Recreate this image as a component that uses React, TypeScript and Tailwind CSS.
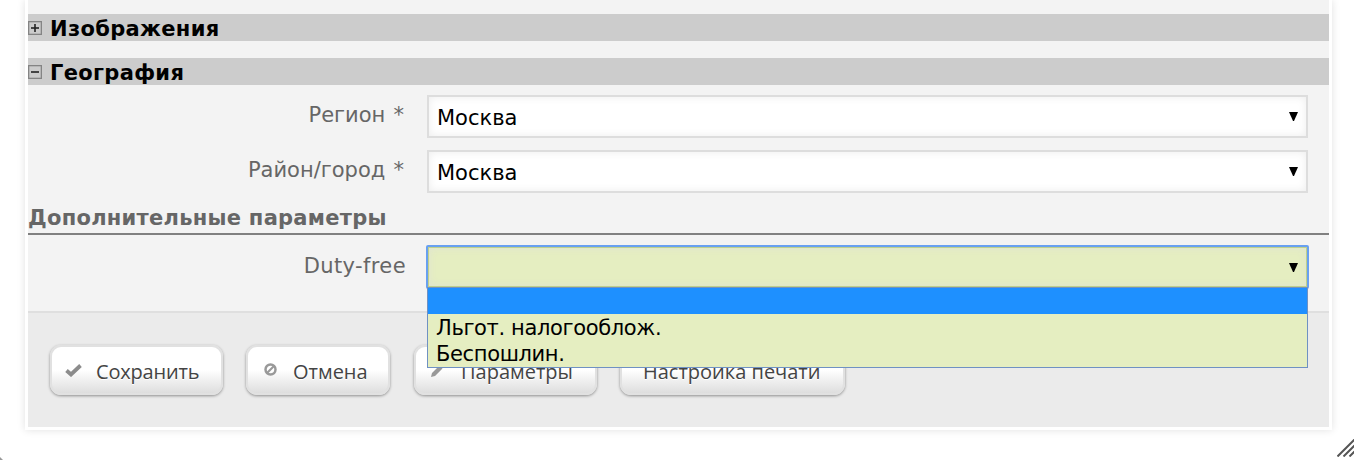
import type { ReactNode } from "react";

const OPTIONS = ["", "Льгот. налогооблож.", "Беспошлин."];

function SectionHeader({ title, open }: { title: string; open: boolean }) {
  return (
    <div className="flex h-[27px] items-center bg-[#cccccc] text-black">
      <svg width="14" height="14" viewBox="0 0 14 14" fill="none">
        <rect x="0.5" y="0.5" width="13" height="13" stroke="#848484" strokeWidth="1.6" />
        <path d="M3 7h8" stroke="#222" strokeWidth="1.6" />
        {!open && <path d="M7 3v8" stroke="#222" strokeWidth="1.6" />}
      </svg>
      <span className="ml-2 pt-[3px] text-[21px] leading-[27px] font-bold tracking-[0.33px] whitespace-nowrap">
        {title}
      </span>
    </div>
  );
}

function Arrow() {
  return (
    <svg width="9" height="9" viewBox="0 0 9 9">
      <path d="M0 0h9L5 9H4z" fill="#000" />
    </svg>
  );
}

interface FieldRowProps {
  label: string;
  labelClassName?: string;
  children: ReactNode;
}

function FieldRow({
  label,
  labelClassName = "pt-[7px] pr-[2px] [word-spacing:1.5px]",
  children,
}: FieldRowProps) {
  return (
    <div className="flex h-[43px]">
      <div
        className={`w-[378px] shrink-0 text-right text-[21px] leading-[26px] text-[#666666] ${labelClassName}`}
      >
        {label}
      </div>
      <div className="relative ml-[21px] w-[881px]">{children}</div>
    </div>
  );
}

function SelectBox({ value }: { value: string }) {
  return (
    <div className="flex h-[43px] items-center justify-between border-2 border-[#dddddd] bg-white pr-2 pl-2 text-[21px] text-black shadow-[inset_0_0_8px_rgba(0,0,0,0.08)]">
      <span className="pt-[5px]">{value}</span>
      <Arrow />
    </div>
  );
}

function OpenSelect() {
  return (
    <>
      <div className="-mx-px flex h-[44px] items-center justify-end rounded-[2px] border-2 border-[#68a0f0] bg-[#e5eec1] pr-[9px] shadow-[inset_0_0_0_1px_#bfd08a,inset_0_0_8px_rgba(220,220,220,0.8)]">
        <Arrow />
      </div>
      <ul className="absolute top-[42px] left-0 z-10 h-[81px] w-[881px] border border-[#6f91c3] bg-[#e5eec1] text-[21px] leading-[28px] tracking-[-0.36px] text-black">
        {OPTIONS.map((option) => (
          <li key={option} className="h-[26px] pl-2 first:bg-[#1e90ff]">
            {option}
          </li>
        ))}
      </ul>
    </>
  );
}

interface FormButtonProps {
  label: string;
  icon?: ReactNode;
  className: string;
}

function FormButton({ label, icon, className }: FormButtonProps) {
  return (
    <button
      type="button"
      className={`flex h-[50px] items-center rounded-[11px] border-2 border-[#e1e1e1] bg-linear-to-b from-white from-50% to-[#dedede] font-['Open_Sans','Noto_Sans',sans-serif] text-[20px] whitespace-nowrap text-[#444444] shadow-[0_1px_3px_rgba(0,0,0,0.4)] [text-shadow:0_1px_0_#fff] ${className}`}
    >
      {icon}
      <span className="pt-[3px]">{label}</span>
    </button>
  );
}

const checkIcon = (
  <svg className="mr-[14px]" width="17" height="14" viewBox="0 0 17 14">
    <path d="M1.5 7.5l4.5 4 9.5-9" fill="none" stroke="#8c8c8c" strokeWidth="3.8" />
  </svg>
);

const cancelIcon = (
  <svg className="mr-[16px] mb-[2px]" width="13" height="13" viewBox="0 0 13 13">
    <circle cx="6.5" cy="6.5" r="5" fill="none" stroke="#999" strokeWidth="2.5" />
    <path d="M3 10l7-7" stroke="#999" strokeWidth="2.2" />
  </svg>
);

const pencilIcon = (
  <svg className="mr-[16px]" width="14" height="14" viewBox="0 0 14 14">
    <path d="M0 14l1-4 7.5-7.5 3 3L4 13zM9.5 1.5L11 0l3 3-1.5 1.5z" fill="#999" />
  </svg>
);

export default function App() {
  return (
    <div className="relative h-[460px] w-[1357px] overflow-hidden bg-white font-['DejaVu_Sans',sans-serif]">
      <main className="mx-[25px] h-[430px] w-[1307px] border-[3px] border-t-0 border-white bg-[#f3f3f3] shadow-[0_0_8px_rgba(0,0,0,0.12)]">
        <div className="flex h-[311px] flex-col pt-[14px]">
          <SectionHeader title="Изображения" open={false} />
          <div className="mt-[17px]">
            <SectionHeader title="География" open />
          </div>
          <div className="mt-[10px] flex flex-col gap-3">
            <FieldRow label="Регион *">
              <SelectBox value="Москва" />
            </FieldRow>
            <FieldRow label="Район/город *">
              <SelectBox value="Москва" />
            </FieldRow>
          </div>
          <h2 className="mt-[10px] h-[32px] border-b-2 border-[#808080] text-[21px] leading-[31px] font-bold tracking-[0.27px] text-[#666666]">
            Дополнительные параметры
          </h2>
          <div className="mt-[10px]">
            <FieldRow label="Duty-free" labelClassName="pt-2 tracking-[0.4px]">
              <OpenSelect />
            </FieldRow>
          </div>
        </div>
        <footer className="flex h-[116px] gap-[23px] border-t-2 border-[#dfdfdf] bg-[#ebebeb] pt-[32px] pl-[22px]">
          <FormButton label="Сохранить" icon={checkIcon} className="w-[173px] pl-[13px] tracking-[-0.2px]" />
          <FormButton label="Отмена" icon={cancelIcon} className="mr-px w-[144px] pl-[16px]" />
          <FormButton label="Параметры" icon={pencilIcon} className="w-[183px] pl-[15px]" />
          <FormButton label="Настройка печати" className="w-[225px] pl-[21px]" />
        </footer>
      </main>
      <svg className="absolute right-[3px] bottom-[3px]" width="17" height="18" viewBox="0 0 17 18">
        <path d="M0.5 17.5l17-17M6.5 17.5l11-11M12.5 17.5l5-5" stroke="#555" strokeWidth="2" />
      </svg>
      <svg className="absolute bottom-0 left-0" width="3" height="3" viewBox="0 0 3 3">
        <path d="M0 0l3 3H0z" fill="#999" />
      </svg>
    </div>
  );
}
